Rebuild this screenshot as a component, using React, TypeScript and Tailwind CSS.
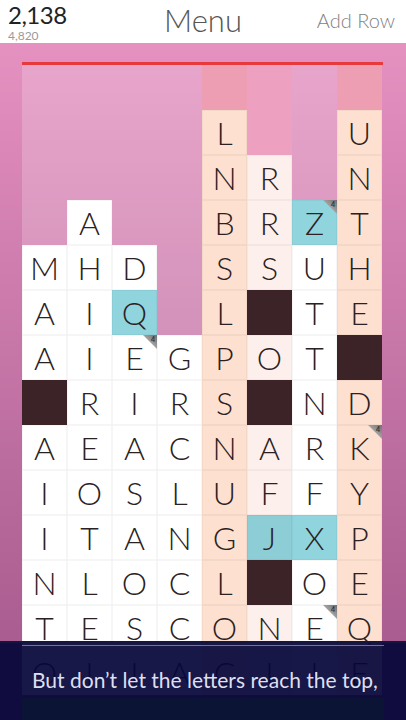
import React from 'react';

const rows = [
  '........',
  '....L..U',
  '....NR.N',
  '.A..BRZT',
  'MHD.SSUH',
  'AIQ.L#TE',
  'AIEGPOT#',
  '#RIRS#ND',
  'AEACNARK',
  'IOSLUFFY',
  'ITANGJXP',
  'NLOCL#OE',
  'TESCONEQ',
  'OIIACIIE',
];

const blue = ['3-6', '5-2', '10-5', '10-6'];
const badges = ['3-6', '6-2', '8-7', '12-6'];

// tints of the empty tops of the tall columns
const emptyTint: Record<string, string> = {
  '0-4': 'bg-[#ee9eb2]',
  '0-7': 'bg-[#ee9eb2]',
  '0-5': 'bg-[#eda0bf]',
  '1-5': 'bg-[#eda0bf]',
};

const columnColor = (c: number) => {
  if (c === 4 || c === 7) return 'bg-[#fde0cf]';
  if (c === 5) return 'bg-[#fdefeb]';
  return 'bg-white';
};

const Cell: React.FC<{ ch: string; r: number; c: number }> = ({ ch, r, c }) => {
  const key = `${r}-${c}`;
  if (ch === '.') {
    return <div className={`h-[45px] ${emptyTint[key] || ''}`}></div>;
  }
  if (ch === '#') {
    return <div className="h-[45px] bg-[#3b2327]"></div>;
  }
  const bg = blue.includes(key) ? (c === 5 ? 'bg-[#8ccdd6]' : 'bg-[#90d5de]') : columnColor(c);
  return (
    <div className={`relative h-[45px] flex items-center justify-center ${bg} shadow-[inset_0_0_0_0.5px_rgba(0,0,0,0.07)]`}>
      <span className="text-[32px] leading-none font-light text-[#2b2122] font-['Lato',sans-serif]">{ch}</span>
      {badges.includes(key) && (
        <>
          <div className="absolute top-0 right-0 w-[14px] h-[14px] bg-gradient-to-bl from-[#6f6f6f] to-[#d8d8d8] [clip-path:polygon(0_0,100%_0,100%_100%)]"></div>
          <span className="absolute top-[1px] right-[2px] text-[7px] leading-none font-bold text-[#333] font-['Lato',sans-serif]">4</span>
        </>
      )}
    </div>
  );
};

const App: React.FC = () => {
  return (
    <div className="relative w-[406px] h-[720px] overflow-hidden bg-gradient-to-b from-[#ea95c4] to-[#a2568a] font-['Lato',sans-serif]">
      {/* Header */}
      <div className="h-[43px] bg-white grid grid-cols-[1fr_auto_1fr] items-start">
        <div className="pl-[8px] flex flex-col">
          <span className="text-[24px] leading-[30px] tracking-[-0.5px] text-[#222]">2,138</span>
          <span className="text-[12px] leading-[11px] text-[#9a9a9a]">4,820</span>
        </div>
        <div className="pt-[3px] text-[31px] leading-[34px] font-light text-[#555]">Menu</div>
        <div className="pt-[8px] pr-[11px] text-right text-[20px] leading-[24px] font-light text-[#7f7f7f]">Add Row</div>
      </div>

      {/* Board */}
      <div className="pt-[19px] px-[22px]">
        <div className="w-[361px] h-[3px] bg-[#e8393d]"></div>
        <div className="w-[360px] bg-white/20 grid grid-cols-8">
          {rows.map((row, r) =>
            row.split('').map((ch, c) => <Cell key={`${r}-${c}`} ch={ch} r={r} c={c} />)
          )}
        </div>
      </div>

      {/* Tutorial overlay */}
      <div className="absolute left-0 right-0 top-[641px] bottom-0 bg-[#05063a]/[0.93] border-t-2 border-[#15163f] flex flex-col">
        <div className="mt-[2px] mx-[22px] h-px bg-white/40"></div>
        <div className="mt-[22px] ml-[32px] text-[21px] leading-[24px] text-[#dedff0] whitespace-nowrap">
          But don’t let the letters reach the top,
        </div>
        <div className="mt-[6px] mx-[22px] flex-1 bg-[#0c1436]"></div>
      </div>
    </div>
  );
};

export default App;
